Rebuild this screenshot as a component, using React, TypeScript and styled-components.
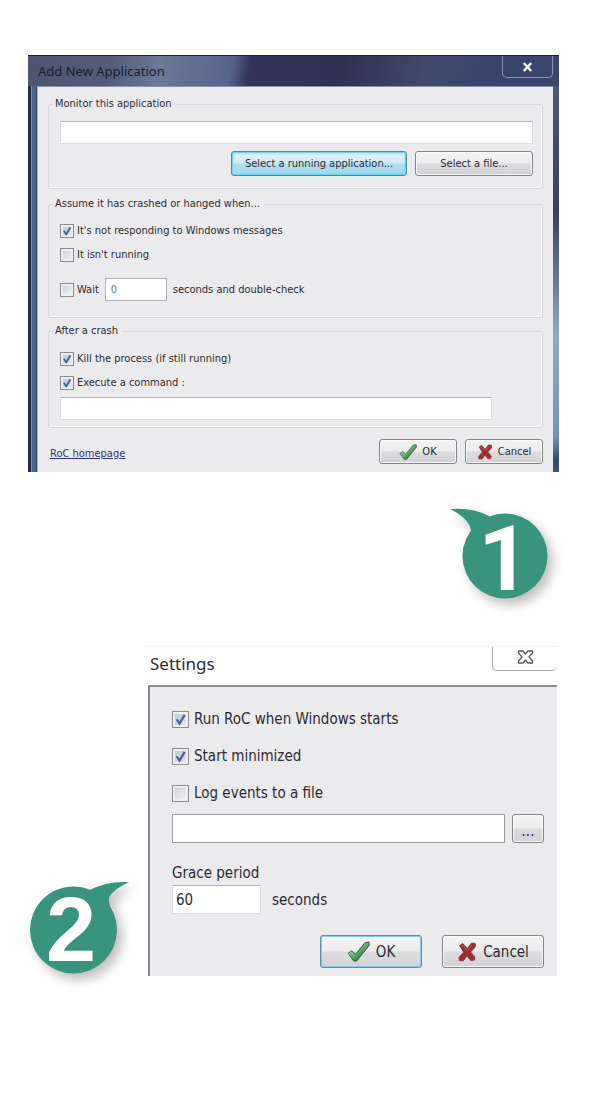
import React, { useId } from "react";
import styled, { createGlobalStyle, css } from "styled-components";

const GlobalStyle = createGlobalStyle`
  *, *::before, *::after { box-sizing: border-box; }
  body { margin: 0; background: #fff; color: #2c2a33; }
  button, input { font: inherit; color: inherit; }
`;

const uiFont = `"DejaVu Sans Condensed", "Noto Sans", sans-serif`;
const titleFont = `"Noto Sans", "Open Sans", sans-serif`;

const Page = styled.main`
  display: flex;
  flex-direction: column;
  padding: 55px 0 140px;
  font-family: ${uiFont};
`;

/* ---------- shared controls ---------- */

const TextField = styled.input<{ $tall?: boolean; $outlined?: boolean }>`
  display: block;
  width: 100%;
  min-width: 0;
  height: ${(p) => (p.$tall ? 29 : 23)}px;
  padding: 0 ${(p) => (p.$tall ? 3 : 5)}px;
  border: 1px solid;
  border-color: ${(p) => (p.$outlined ? "#9c9ca0" : "#b4b4b8 #dcdce0 #dcdce0")};
  border-radius: 0;
  background: #fff;
  outline: none;
`;

const Button = styled.button<{ $tone?: "hot" | "focus"; $tall?: boolean }>`
  display: flex;
  align-items: center;
  justify-content: center;
  gap: ${(p) => (p.$tall ? 6 : 5)}px;
  height: ${(p) => (p.$tall ? 33 : 25)}px;
  padding: 0;
  border: 1px solid #85858a;
  border-radius: 3px;
  background: linear-gradient(#f3f3f4 0%, #ececee 48%, #dcdcdf 52%, #d3d3d7 100%);
  box-shadow: inset 0 0 0 1px #f8f8fa;
  white-space: nowrap;
  ${(p) =>
    p.$tone === "hot" &&
    css`
      border-color: #4c8ba4;
      background: linear-gradient(#e3f3fa 0%, #cfebf6 48%, #b0def0 52%, #a5d8ec 100%);
      box-shadow: inset 0 0 0 1px #6fd0ec, inset 0 0 3px 1px #7cd6f0;
    `}
  ${(p) =>
    p.$tone === "focus" &&
    css`
      border-color: #5d8fa3;
      box-shadow: inset 0 0 0 1px #84cbe0;
    `}
`;

const CheckLabel = styled.label<{ $large?: boolean }>`
  display: flex;
  align-items: center;
  gap: ${(p) => (p.$large ? 5 : 3)}px;
  line-height: ${(p) => (p.$large ? 20 : 16)}px;
  white-space: nowrap;
`;

const BoxWrap = styled.span<{ $large?: boolean }>`
  position: relative;
  flex: none;
  width: ${(p) => (p.$large ? 17 : 14)}px;
  height: ${(p) => (p.$large ? 17 : 14)}px;
  svg {
    position: absolute;
    inset: 0;
    width: 100%;
    height: 100%;
    pointer-events: none;
    visibility: hidden;
  }
  input:checked + svg { visibility: visible; }
`;

const BoxInput = styled.input`
  appearance: none;
  display: block;
  width: 100%;
  height: 100%;
  margin: 0;
  border: 1px solid #8b8c92;
  background: linear-gradient(135deg, #c9cbd2, #f7f7f9);
  box-shadow: inset 0 0 0 2px #eeeef2;
  &:checked { background: linear-gradient(135deg, #b4c4dc, #dfe9f6); }
`;

function Check({ children, checked, large }: { children: React.ReactNode; checked?: boolean; large?: boolean }) {
  return (
    <CheckLabel $large={large}>
      <BoxWrap $large={large}>
        <BoxInput type="checkbox" defaultChecked={checked} />
        <svg viewBox="0 0 14 14" aria-hidden="true">
          <path d="M3.8 6.8 6.2 10.4 10.4 3.2" fill="none" stroke="#4f6288" strokeWidth="1.8" />
        </svg>
      </BoxWrap>
      {children}
    </CheckLabel>
  );
}

function TickIcon({ size }: { size: number }) {
  const id = useId();
  return (
    <svg width={size} height={size} viewBox="0 0 20 20" aria-hidden="true">
      <defs>
        <linearGradient id={id} x1="0" y1="0" x2="1" y2="1">
          <stop offset="0.2" stopColor="#a5dba2" />
          <stop offset="0.5" stopColor="#5faf68" />
          <stop offset="0.8" stopColor="#23633a" />
        </linearGradient>
      </defs>
      <path
        d="M1 11.6 4 9.4 7.4 12.4 15.6 2.4 19 1.6 19.4 4.6 8.4 18.2 6 18.4Z"
        fill={`url(#${id})`}
        stroke="#2f5f3c"
        strokeWidth="0.8"
        strokeLinejoin="round"
      />
    </svg>
  );
}

function CrossIcon({ size }: { size: number }) {
  return (
    <svg width={size} height={size} viewBox="0 0 20 20" aria-hidden="true">
      <path
        d="M2.6 3.6 5.8 1.6 10.2 6.4 14.6 1 18.2 1.6 18.4 4.8 13.6 10 18 15.2 17.2 18.2 13.6 18.4 10 14 6.2 18.8 2.4 18.6 2 15.4 6.6 10.2Z"
        fill="#9c2f32"
        stroke="#7c2a2d"
        strokeWidth="0.8"
        strokeLinejoin="round"
      />
      <path d="M4.4 4 6 3.6 9.8 8.2M15 3 10.6 8.4" fill="none" stroke="#c06466" strokeWidth="1" />
    </svg>
  );
}

/* ---------- "Add New Application" window ---------- */

const GlassWindow = styled.section`
  margin: 0 41px 0 28px;
  padding: 0 6px 0 10px;
  font-size: 11px;
  line-height: 16px;
  border-top: 1px solid #20222e;
  background:
    linear-gradient(90deg, #23283d 0 3px, #8493ab 3px 4px, #48678f 4px 8px, #33476a 8px 9px, #a4adba 9px 10px, transparent 10px) 0 30px / 100% 100% no-repeat,
    linear-gradient(#4b5877 0%, #34415f 30%, #8cabc8 60%, #6a98c3 84%, #33496e 90%, #5378a5 100%) right 0 top 30px / 6px 100% no-repeat,
    linear-gradient(100deg, #4d5570 0%, #535d7a 14%, #6a7a98 22%, #55648a 34%, #33345a 37%, #2f3050 52%, #404a6d 66%, #38456a 76%, #3d4a70 100%);
`;

const GlassTitle = styled.header`
  display: flex;
  justify-content: space-between;
  height: 31px;
  border-bottom: 1px solid #8c96aa;
`;

const GlassHeading = styled.h1`
  margin: 0;
  font: 400 13px/31px ${titleFont};
  color: #191c28;
`;

const GlassClose = styled.button`
  display: grid;
  place-items: center;
  width: 51px;
  height: 22px;
  padding: 0;
  border: 1px solid #8d95ab;
  border-top: 0;
  border-radius: 0 0 5px 5px;
  background: transparent;
`;

const GlassBody = styled.div`
  padding: 9px 10px 8px;
  background: #ebebed;
`;

const Group = styled.fieldset<{ $top: number; $bottom: number; $after: number }>`
  min-width: 0;
  margin: 0 0 ${(p) => p.$after}px;
  padding: ${(p) => p.$top}px 9px ${(p) => p.$bottom}px 11px;
  border: 1px solid #d7d8dd;
  border-radius: 2px;
  box-shadow: inset -1px -1px 0 #f7f7f8;
`;

const Legend = styled.legend`
  margin-left: -7px;
  padding: 0 4px 0 2px;
`;

const ButtonRow = styled.div`
  display: grid;
  grid-template-columns: 176px 118px;
  justify-content: end;
  gap: 8px;
  margin-top: 7px;
`;

const Stack = styled.div<{ $gap: number }>`
  display: flex;
  flex-direction: column;
  align-items: flex-start;
  gap: ${(p) => p.$gap}px;
`;

const WaitRow = styled.div`
  display: flex;
  align-items: center;
  gap: 6px;
  margin-top: 15px;
`;

const WaitField = styled(TextField)`
  width: 62px;
  border-color: #b4b4b8;
  color: #77777c;
`;

const CommandRow = styled.div`
  margin: 6px 41px 0 0;
`;

const GlassFooter = styled.footer`
  display: grid;
  grid-template-columns: 1fr 78px 78px;
  align-items: center;
  gap: 8px;
`;

const HomeLink = styled.a`
  justify-self: start;
  margin-left: 2px;
  padding-top: 4px;
  color: #34307c;
  text-decoration: underline;
`;

function AddApplicationWindow() {
  return (
    <GlassWindow aria-label="Add New Application">
      <GlassTitle>
        <GlassHeading>Add New Application</GlassHeading>
        <GlassClose type="button" aria-label="Close">
          <svg width="11" height="10" viewBox="0 0 11 10" aria-hidden="true">
            <path d="M1.8 1 9.2 9M9.2 1 1.8 9" fill="none" stroke="#f1f2f6" strokeWidth="2.5" />
          </svg>
        </GlassClose>
      </GlassTitle>
      <GlassBody>
        <Group $top={9} $bottom={12} $after={7}>
          <Legend>Monitor this application</Legend>
          <TextField type="text" aria-label="Application" />
          <ButtonRow>
            <Button type="button" $tone="hot">Select a running application...</Button>
            <Button type="button">Select a file...</Button>
          </ButtonRow>
        </Group>
        <Group $top={11} $bottom={16} $after={5}>
          <Legend>Assume it has crashed or hanged when...</Legend>
          <Stack $gap={8}>
            <Check checked>It's not responding to Windows messages</Check>
            <Check>It isn't running</Check>
          </Stack>
          <WaitRow>
            <Check>Wait</Check>
            <WaitField type="text" defaultValue="0" aria-label="Seconds to wait" />
            <span>seconds and double-check</span>
          </WaitRow>
        </Group>
        <Group $top={12} $bottom={7} $after={11}>
          <Legend>After a crash</Legend>
          <Stack $gap={8}>
            <Check checked>Kill the process (if still running)</Check>
            <Check checked>Execute a command :</Check>
          </Stack>
          <CommandRow>
            <TextField type="text" aria-label="Command" />
          </CommandRow>
        </Group>
        <GlassFooter>
          <HomeLink href="#homepage">RoC homepage</HomeLink>
          <Button type="button"><TickIcon size={18} />OK</Button>
          <Button type="button"><CrossIcon size={16} />Cancel</Button>
        </GlassFooter>
      </GlassBody>
    </GlassWindow>
  );
}

/* ---------- numbered callouts ---------- */

const Callout = styled.svg`
  display: block;
  flex: none;
  overflow: visible;
  filter: drop-shadow(5px 6px 6px rgba(70, 60, 60, 0.35));
`;

const CalloutDigit = styled.text<{ $family: string }>`
  font: 700 90px ${(p) => p.$family}, sans-serif;
  fill: #fff;
  text-anchor: middle;
`;

const FirstStep = styled.div`
  display: flex;
  justify-content: flex-end;
  padding: 35px 52px 47px 0;
`;

const SecondStep = styled.div`
  display: flex;
  align-items: flex-end;
  padding: 0 43px 0 30px;
`;

const CalloutSlot = styled.div`
  flex: none;
  width: 113px;
  padding-bottom: 2px;
`;

/* ---------- "Settings" window ---------- */

const SettingsWindow = styled.section`
  flex: 1;
  min-width: 0;
  font-size: 15px;
  line-height: 20px;
  border-top: 1px solid #f0f0f1;
`;

const SettingsTitle = styled.header`
  display: flex;
  justify-content: space-between;
  height: 38px;
  padding-left: 7px;
`;

const SettingsHeading = styled.h2`
  margin: 0;
  font: 400 17px/34px ${titleFont};
`;

const SettingsClose = styled.button`
  display: grid;
  place-items: center;
  width: 65px;
  height: 24px;
  padding: 0 0 4px;
  border: 1px solid #a5a5a9;
  border-width: 0 0 1px 1px;
  border-radius: 0 0 5px 5px;
  background: transparent;
`;

const SettingsBody = styled.div`
  margin-left: 5px;
  padding: 22px 13px 8px 22px;
  border: solid #8d8d91;
  border-width: 2px 0 0 2px;
  background: #ebebed;
`;

const FileRow = styled.div`
  display: grid;
  grid-template-columns: 1fr 32px;
  gap: 7px;
  margin: 11px 0 20px;
`;

const BrowseButton = styled(Button)`
  height: 29px;
  padding-top: 4px;
`;

const GraceField = styled(TextField)`
  width: 89px;
`;

const GraceRow = styled.div`
  display: flex;
  align-items: center;
  gap: 11px;
  margin-top: 2px;
`;

const SettingsActions = styled.footer`
  display: grid;
  grid-template-columns: 102px 102px;
  justify-content: end;
  gap: 20px;
  margin-top: 21px;
`;

const GraceLabel = styled.label`
  display: block;
`;

function Settings() {
  const graceId = useId();
  return (
    <SettingsWindow aria-label="Settings">
      <SettingsTitle>
        <SettingsHeading>Settings</SettingsHeading>
        <SettingsClose type="button" aria-label="Close">
          <svg width="17" height="14" viewBox="0 0 17 14" aria-hidden="true">
            <path
              d="M1.5 1H6L8.5 4 11 1H15.5V3L12 7 15.5 11V13H11L8.5 10 6 13H1.5V11L5 7 1.5 3Z"
              fill="#fff"
              stroke="#5e5e62"
              strokeWidth="1.4"
              strokeLinejoin="round"
            />
          </svg>
        </SettingsClose>
      </SettingsTitle>
      <SettingsBody>
        <Stack $gap={17}>
          <Check large checked>Run RoC when Windows starts</Check>
          <Check large checked>Start minimized</Check>
          <Check large>Log events to a file</Check>
        </Stack>
        <FileRow>
          <TextField type="text" aria-label="Log file" $tall $outlined />
          <BrowseButton type="button" aria-label="Browse">...</BrowseButton>
        </FileRow>
        <GraceLabel htmlFor={graceId}>Grace period</GraceLabel>
        <GraceRow>
          <GraceField id={graceId} type="text" defaultValue="60" $tall />
          <span>seconds</span>
        </GraceRow>
        <SettingsActions>
          <Button type="button" $tall $tone="focus"><TickIcon size={23} />OK</Button>
          <Button type="button" $tall><CrossIcon size={20} />Cancel</Button>
        </SettingsActions>
      </SettingsBody>
    </SettingsWindow>
  );
}

export default function App() {
  return (
    <>
      <GlobalStyle />
      <Page>
        <AddApplicationWindow />
        <FirstStep>
          <Callout width="98" height="92" viewBox="0 0 98 92" role="img" aria-label="Step 1">
            <circle cx="55" cy="49" r="42.5" fill="#38947c" />
            <path d="M0 2Q22 0 39 9L48 30 13 42Q19 32 21 24 20 12 0 2Z" fill="#38947c" />
            <CalloutDigit $family="Roboto" x="54" y="83">1</CalloutDigit>
          </Callout>
        </FirstStep>
        <SecondStep>
          <CalloutSlot>
            <Callout width="100" height="92" viewBox="0 0 100 92" role="img" aria-label="Step 2">
              <circle cx="43.5" cy="48" r="43.5" fill="#38947c" />
              <path d="M99 0Q76 -1 60 8L50 30 84 32Q78 24 79 15 84 7 99 0Z" fill="#38947c" />
              <CalloutDigit $family="Liberation Sans" x="41" y="79">2</CalloutDigit>
            </Callout>
          </CalloutSlot>
          <Settings />
        </SecondStep>
      </Page>
    </>
  );
}
